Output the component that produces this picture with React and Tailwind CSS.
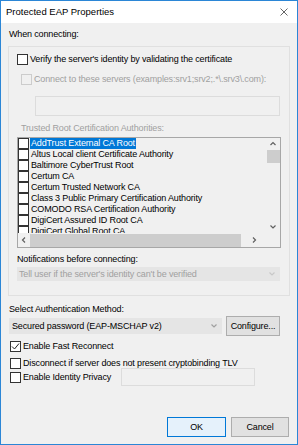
import * as React from "react";

function Box({ checked, disabled, className = "" }) {
  return (
    <span
      className={`flex h-[11px] w-[11px] shrink-0 items-center justify-center border ${
        disabled ? "border-[#cccccc] bg-[#f0f0f0]" : "border-[#333333] bg-white"
      } ${className}`}
    >
      {checked && (
        <svg width="9" height="9" viewBox="0 0 9 9">
          <polyline points="1,4.5 3.5,7 8,1.5" fill="none" stroke="#222" strokeWidth="1" />
        </svg>
      )}
    </span>
  );
}

function Chevron({ dir = "down", color = "#606060" }) {
  const pts = {
    down: "1.5,2.5 4,5 6.5,2.5",
    up: "1.5,5 4,2.5 6.5,5",
    left: "5,1.5 2.5,4 5,6.5",
    right: "3,1.5 5.5,4 3,6.5",
  }[dir];
  return (
    <svg width="8" height="8" viewBox="0 0 8 8">
      <polyline points={pts} fill="none" stroke={color} strokeWidth="1.2" />
    </svg>
  );
}

const cas = [
  "AddTrust External CA Root",
  "Altus Local client Certificate Authority",
  "Baltimore CyberTrust Root",
  "Certum CA",
  "Certum Trusted Network CA",
  "Class 3 Public Primary Certification Authority",
  "COMODO RSA Certification Authority",
  "DigiCert Assured ID Root CA",
  "DigiCert Global Root CA",
];

export default function App() {
  return (
    <div className="flex h-[445px] w-[298px] flex-col border border-[#2b86d6] bg-[#f0f0f0] font-['Liberation_Sans',Arial,sans-serif] text-[9px] leading-[12px] tracking-[-0.15px] text-black">
      {/* Title bar */}
      <div className="flex h-[22px] shrink-0 items-center justify-between bg-white pl-[5px] pr-[9px]">
        <span className="text-[9.5px] tracking-normal">Protected EAP Properties</span>
        <svg width="8" height="8" viewBox="0 0 8 8">
          <path d="M0.5 0.5 L7.5 7.5 M7.5 0.5 L0.5 7.5" stroke="#555" strokeWidth="0.9" />
        </svg>
      </div>

      <div className="flex flex-1 flex-col px-[7px]">
        <div className="mt-[5px] pl-[1px]">When connecting:</div>

        {/* Group box */}
        <div className="mt-[6px] flex h-[250px] flex-col border border-[#e0e0e0] pl-[8px] pr-[8px]">
          <div className="mt-[6px] flex items-center gap-[2px]">
            <Box />
            <span>Verify the server's identity by validating the certificate</span>
          </div>

          <div className="mt-[8px] flex items-center gap-[2px] pl-[4px] text-[#a0a0a0]">
            <Box disabled />
            <span>Connect to these servers (examples:srv1;srv2;.*\.srv3\.com):</span>
          </div>

          <div className="ml-[18px] mt-[11px] h-[20px] w-[245px] border border-[#dcdcdc] bg-[#f0f0f0]" />

          <div className="mt-[6px] pl-[4px] text-[#a0a0a0]">Trusted Root Certification Authorities:</div>

          {/* List */}
          <div className="mt-[3px] flex h-[111px] w-[264px] flex-col border border-[#a7a7a7] bg-[#f0f0f0]">
            <div className="flex h-[95px] overflow-hidden">
              <div className="flex flex-1 flex-col overflow-hidden leading-[11px]">
                {cas.map((c, i) => (
                  <div key={c} className="flex h-[11px] shrink-0 items-center">
                    <Box />
                    <span
                      className={`ml-[1px] whitespace-nowrap px-[1px] ${
                        i === 0 ? "bg-[#0078d7] text-white" : ""
                      }`}
                    >
                      {c}
                    </span>
                  </div>
                ))}
              </div>
              <div className="flex w-[14px] shrink-0 flex-col items-center">
                <div className="flex h-[12px] items-center justify-center">
                  <Chevron dir="up" />
                </div>
                <div className="h-[13px] w-[13px] bg-[#cdcdcd]" />
                <div className="flex-1" />
                <div className="flex h-[12px] items-center justify-center">
                  <Chevron dir="down" />
                </div>
              </div>
            </div>
            <div className="flex h-[14px] items-center">
              <div className="flex w-[12px] justify-center">
                <Chevron dir="left" />
              </div>
              <div className="h-[13px] w-[211px] bg-[#cdcdcd]" />
              <div className="flex w-[26px] justify-center">
                <Chevron dir="right" />
              </div>
            </div>
          </div>

          <div className="mt-[5px]">Notifications before connecting:</div>
          <div className="mt-[2px] flex h-[14px] w-[263px] items-center justify-between bg-[#e5e5e5] pl-[2px] pr-[4px] text-[#a0a0a0]">
            <span>Tell user if the server's identity can't be verified</span>
            <Chevron dir="down" color="#c8c8c8" />
          </div>
        </div>

        <div className="mt-[7px] pl-[1px]">Select Authentication Method:</div>
        <div className="mt-[1px] flex items-center gap-[4px] pl-[1px]">
          <div className="flex h-[16px] w-[213px] items-center justify-between bg-[#e5e5e5] pl-[3px] pr-[4px]">
            <span>Secured password (EAP-MSCHAP v2)</span>
            <Chevron dir="down" color="#a0a0a0" />
          </div>
          <div className="flex h-[20px] w-[54px] items-center justify-center border border-[#adadad] bg-[#e1e1e1]">
            Configure...
          </div>
        </div>

        <div className="mt-[4px] flex items-center gap-[2px] pl-[2px]">
          <Box checked />
          <span>Enable Fast Reconnect</span>
        </div>
        <div className="mt-[5px] flex items-center gap-[2px] pl-[2px]">
          <Box />
          <span>Disconnect if server does not present cryptobinding TLV</span>
        </div>
        <div className="mt-[-1px] flex items-center pl-[2px]">
          <Box />
          <span className="ml-[2px] w-[98px]">Enable Identity Privacy</span>
          <div className="h-[18px] w-[134px] border border-[#dcdcdc] bg-[#f0f0f0]" />
        </div>

        <div className="mt-auto mb-[7px] flex justify-end gap-[5px] pr-[1px]">
          <div className="flex h-[20px] w-[59px] items-center justify-center border border-[#0078d7] bg-[#e5f1fb]">
            OK
          </div>
          <div className="flex h-[20px] w-[58px] items-center justify-center border border-[#adadad] bg-[#e1e1e1]">
            Cancel
          </div>
        </div>
      </div>
    </div>
  );
}
